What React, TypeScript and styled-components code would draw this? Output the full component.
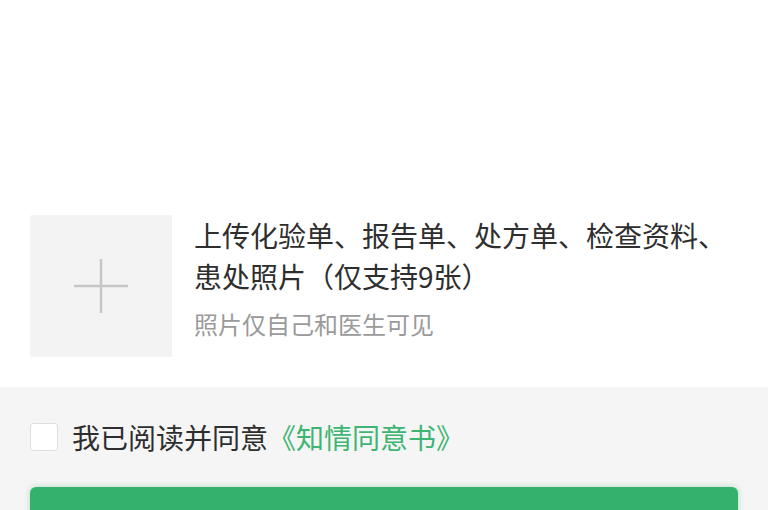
import { useState } from "react";
import styled, { createGlobalStyle } from "styled-components";

const GlobalStyle = createGlobalStyle`
  * {
    box-sizing: border-box;
  }
  body {
    margin: 0;
    background: #f5f5f5;
    font-family: "Noto Sans CJK SC", "Noto Sans", sans-serif;
    color: #333;
  }
`;

export default function App() {
  const [agreed, setAgreed] = useState(false);

  return (
    <Page>
      <GlobalStyle />
      <FormCard>
        <Note aria-label="病情描述" />
        <UploadRow>
          <UploadBox type="button" aria-label="上传图片">
            <svg width="54" height="54" viewBox="0 0 54 54">
              <path d="M27 0v54M0 27h54" stroke="#c6c6c6" strokeWidth="2.5" />
            </svg>
          </UploadBox>
          <UploadInfo>
            <UploadTitle>上传化验单、报告单、处方单、检查资料、患处照片（仅支持9张）</UploadTitle>
            <UploadHint>照片仅自己和医生可见</UploadHint>
          </UploadInfo>
        </UploadRow>
      </FormCard>

      <Footer>
        <Agreement>
          <Checkbox
            type="checkbox"
            checked={agreed}
            onChange={(e) => setAgreed(e.target.checked)}
          />
          <span>
            我已阅读并同意<Link>《知情同意书》</Link>
          </span>
        </Agreement>
        <SubmitButton type="button">提交</SubmitButton>
      </Footer>
    </Page>
  );
}

const Page = styled.main`
  display: flex;
  flex-direction: column;
  min-height: 510px;
`;

const FormCard = styled.section`
  background: #fff;
  padding: 0 30px 30px;
`;

const Note = styled.textarea`
  display: block;
  width: 100%;
  height: 185px;
  margin: 0;
  padding: 0;
  border: none;
  outline: none;
  resize: none;
  background: transparent;
  font: inherit;
  font-size: 28px;
`;

const UploadRow = styled.div`
  display: flex;
  align-items: flex-start;
  gap: 22px;
  margin-top: 30px;
`;

const UploadBox = styled.button`
  flex: 0 0 142px;
  height: 142px;
  display: flex;
  align-items: center;
  justify-content: center;
  padding: 0;
  border: none;
  border-radius: 2px;
  background: #f3f3f3;
  cursor: pointer;
`;

const UploadInfo = styled.div`
  display: flex;
  flex-direction: column;
  min-width: 0;
`;

const UploadTitle = styled.p`
  margin: 0;
  font-size: 28px;
  line-height: 41px;
  color: #2e2e2e;
`;

const UploadHint = styled.p`
  margin: 10px 0 0;
  font-size: 24px;
  line-height: 34px;
  color: #9a9a9a;
`;

const Footer = styled.section`
  flex: 1;
  display: flex;
  flex-direction: column;
  gap: 36px;
  padding: 36px 30px 0;
  background: #f5f5f5;
`;

const Agreement = styled.label`
  display: flex;
  align-items: center;
  gap: 14px;
  font-size: 28px;
  line-height: 28px;
  color: #2e2e2e;
`;

const Checkbox = styled.input`
  appearance: none;
  flex: 0 0 28px;
  width: 28px;
  height: 28px;
  margin: 0;
  border: 1px solid #dedede;
  border-radius: 3px;
  background: #fff;

  &:checked {
    background: #3cb371;
    border-color: #3cb371;
  }
`;

const Link = styled.span`
  color: #3fb573;
`;

const SubmitButton = styled.button`
  height: 96px;
  border: none;
  border-radius: 6px;
  background: #34b16b;
  box-shadow: 0 0 6px rgba(52, 177, 107, 0.35);
  color: #fff;
  font: inherit;
  font-size: 32px;
  line-height: 32px;
`;
